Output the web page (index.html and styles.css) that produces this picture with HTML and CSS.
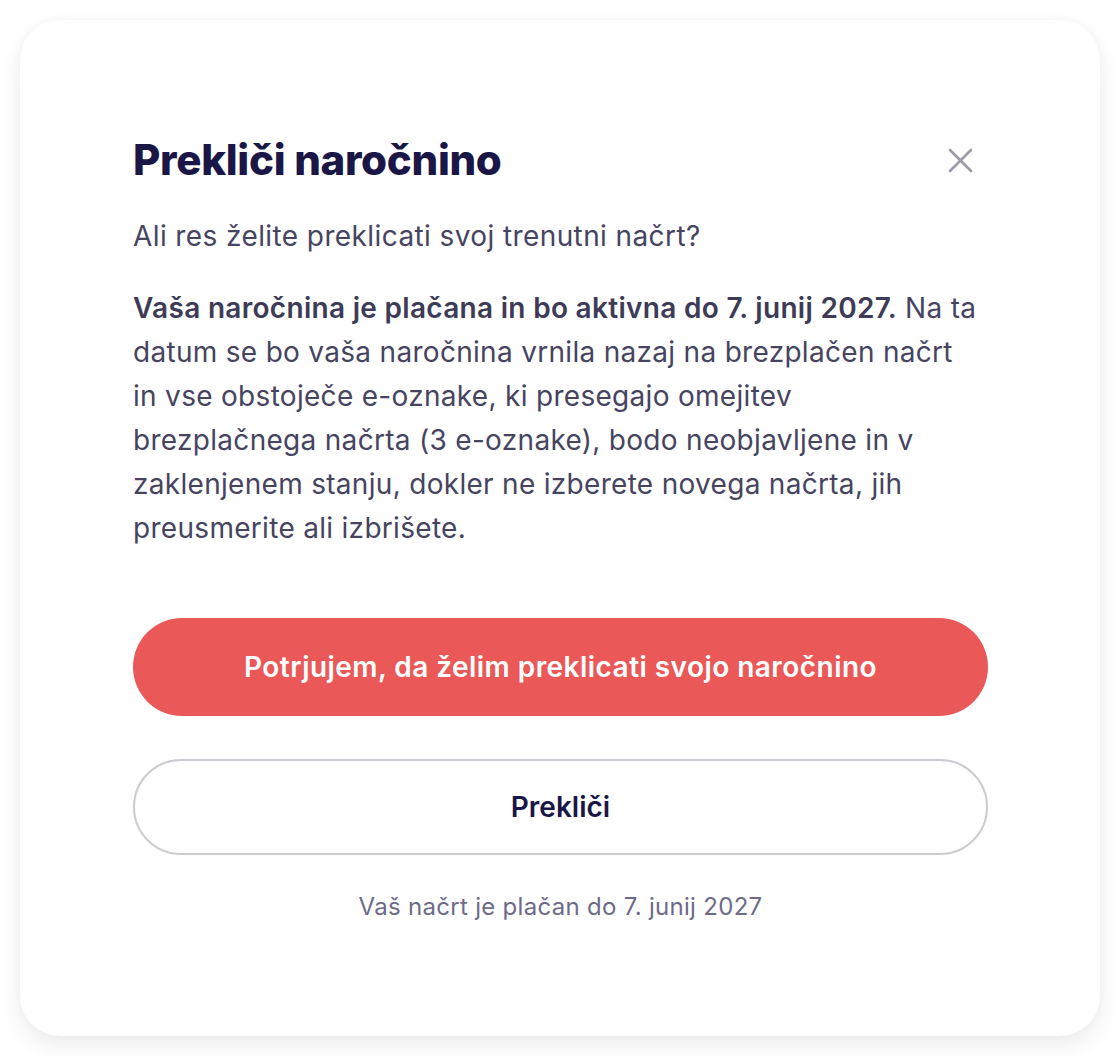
FILE: index.html
```html
<!DOCTYPE html>
<html lang="sl">
  <head>
    <meta charset="UTF-8" />
    <meta name="viewport" content="width=device-width, initial-scale=1.0" />
    <title>Prekliči naročnino</title>
    <link rel="stylesheet" href="styles.css">
  </head>
  <body>
    <div class="modal">
      <div class="modal-header">
        <h1>Prekliči naročnino</h1>
        <button class="close-button" aria-label="Zapri">
          <svg width="25" height="25" viewBox="0 0 25 25">
            <path d="M2 2 L23 23 M23 2 L2 23" stroke="#9b9aa6" stroke-width="2.6" stroke-linecap="round" fill="none" />
          </svg>
        </button>
      </div>

      <p class="question">Ali res želite preklicati svoj trenutni načrt?</p>

      <p class="details">
        <strong>Vaša naročnina je plačana in bo aktivna do 7. junij 2027.</strong>
        Na ta datum se bo vaša naročnina vrnila nazaj na brezplačen načrt in vse
        obstoječe e-oznake, ki presegajo omejitev brezplačnega načrta (3 e-oznake),
        bodo neobjavljene in v zaklenjenem stanju, dokler ne izberete novega načrta,
        jih preusmerite ali izbrišete.
      </p>

      <div class="actions">
        <button class="btn btn-danger">Potrjujem, da želim preklicati svojo naročnino</button>
        <button class="btn btn-outline">Prekliči</button>
      </div>

      <p class="footnote">Vaš načrt je plačan do 7. junij 2027</p>
    </div>
  </body>
</html>
```

FILE: styles.css
```css
* {
  margin: 0;
  padding: 0;
  box-sizing: border-box;
}

body {
  background: #ffffff;
  font-family: Inter, "Noto Sans", sans-serif;
  color: #46445f;
  padding: 20px;
}

.modal {
  width: 1080px;
  height: 1016px;
  background: #ffffff;
  border-radius: 40px;
  box-shadow: 0 10px 24px rgba(0, 0, 0, 0.07), 0 0 12px rgba(0, 0, 0, 0.03);
  padding: 115px 112px 0 113px;
}

.modal-header {
  display: flex;
  align-items: center;
  justify-content: space-between;
}

.modal-header h1 {
  font-size: 42px;
  font-weight: 800;
  line-height: 50px;
  color: #1a1747;
  letter-spacing: -0.3px;
}

.close-button {
  background: none;
  border: none;
  cursor: pointer;
  width: 25px;
  height: 25px;
  margin-right: 15px;
}

.question {
  margin-top: 29px;
  font-size: 28px;
  line-height: 44px;
  letter-spacing: 0.4px;
}

.details {
  max-width: 846px;
  margin-top: 28px;
  font-size: 28px;
  line-height: 44px;
  letter-spacing: 0.3px;
}

.details strong {
  font-weight: 600;
  color: #3d3b57;
}

.actions {
  margin-top: 68px;
  display: flex;
  flex-direction: column;
  gap: 43px;
}

.btn {
  width: 100%;
  height: 98px;
  border-radius: 49px;
  font-family: inherit;
  font-size: 28px;
  font-weight: 600;
  cursor: pointer;
}

.btn-danger {
  background: #eb5858;
  color: #ffffff;
  border: none;
  letter-spacing: 0.45px;
}

.btn-outline {
  height: 96px;
  background: #ffffff;
  color: #1a1747;
  border: 2px solid #cbcbd2;
}

.footnote {
  margin-top: 37px;
  text-align: center;
  font-size: 24px;
  line-height: 30px;
  letter-spacing: 0.3px;
  color: #6d6b88;
}
```
